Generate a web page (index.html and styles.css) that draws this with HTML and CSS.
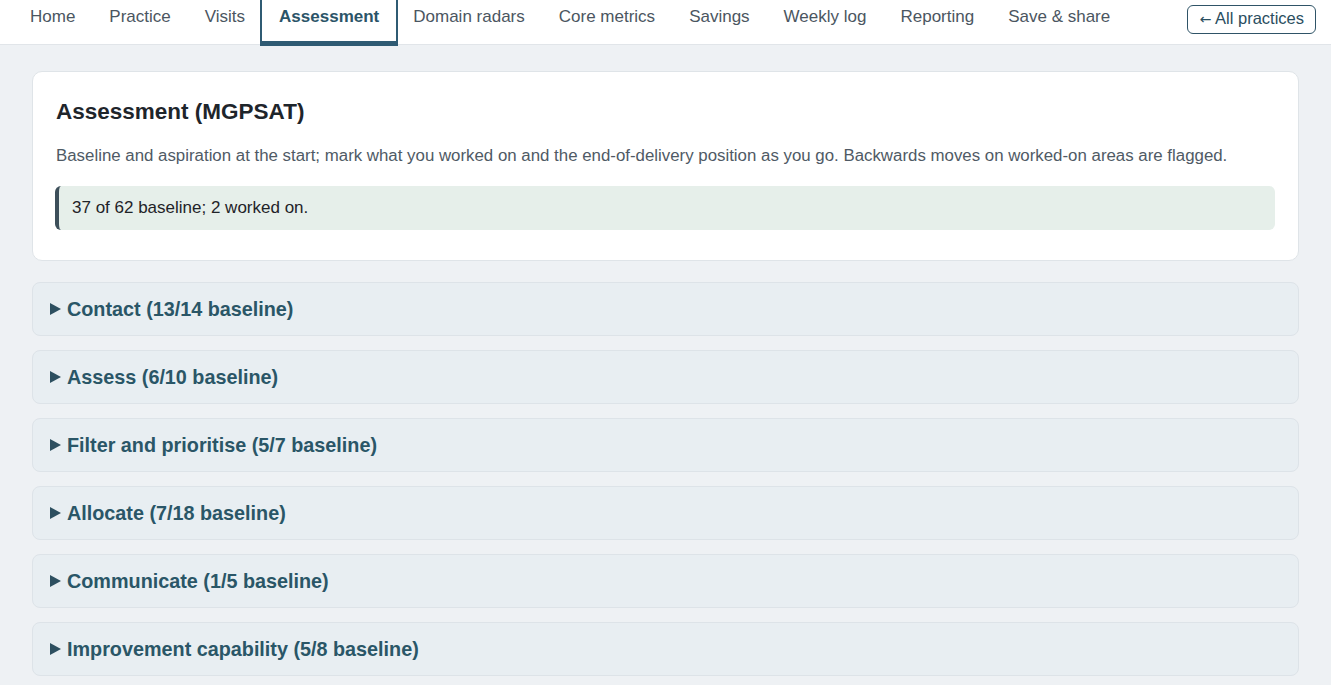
FILE: index.html
```html
<!DOCTYPE html>
<html lang="en">
<head>
<meta charset="utf-8">
<title>Assessment (MGPSAT)</title>
<link rel="stylesheet" href="styles.css">
</head>
<body>
<nav class="topnav">
  <a class="tab" href="#">Home</a>
  <a class="tab" href="#">Practice</a>
  <a class="tab" href="#">Visits</a>
  <a class="tab active" href="#">Assessment</a>
  <a class="tab" href="#">Domain radars</a>
  <a class="tab" href="#">Core metrics</a>
  <a class="tab" href="#">Savings</a>
  <a class="tab" href="#">Weekly log</a>
  <a class="tab" href="#">Reporting</a>
  <a class="tab" href="#">Save &amp; share</a>
  <a class="back" href="#"><span class="arrow">←</span> All practices</a>
</nav>
<main class="main">
  <section class="card">
    <h2 class="card-title">Assessment (MGPSAT)</h2>
    <p class="card-lead">Baseline and aspiration at the start; mark what you worked on and the end-of-delivery position as you go. Backwards moves on worked-on areas are flagged.</p>
    <div class="summary-box">37 of 62 baseline; 2 worked on.</div>
  </section>
  <details class="domain"><summary class="domain-head"><span class="tri"></span>Contact (13/14 baseline)</summary></details>
  <details class="domain"><summary class="domain-head"><span class="tri"></span>Assess (6/10 baseline)</summary></details>
  <details class="domain"><summary class="domain-head"><span class="tri"></span>Filter and prioritise (5/7 baseline)</summary></details>
  <details class="domain"><summary class="domain-head"><span class="tri"></span>Allocate (7/18 baseline)</summary></details>
  <details class="domain"><summary class="domain-head"><span class="tri"></span>Communicate (1/5 baseline)</summary></details>
  <details class="domain"><summary class="domain-head"><span class="tri"></span>Improvement capability (5/8 baseline)</summary></details>
</main>
</body>
</html>
```
FILE: styles.css
```css
html, body {
  margin: 0;
  padding: 0;
}
body {
  background: #eef1f4;
  font-family: "Liberation Sans", Arial, Helvetica, sans-serif;
  color: #1f2328;
  overflow: hidden;
}
.topnav {
  display: flex;
  align-items: flex-start;
  height: 44px;
  padding-left: 13px;
  background: #ffffff;
  border-bottom: 1px solid #e1e5e9;
}
.tab {
  box-sizing: border-box;
  height: 44px;
  padding: 7px 17px 0;
  line-height: 20px;
  font-size: 17px;
  color: #4b5661;
  text-decoration: none;
  border-bottom: 3px solid transparent;
}
.tab.active {
  font-weight: 700;
  color: #2b5468;
  border-bottom-color: #2f5b73;
  outline: 2px solid #2f5b73;
  outline-offset: 0;
}
.back {
  margin: 5px 15px 0 auto;
  padding: 2px 11px 4px 12px;
  line-height: 20px;
  font-size: 16.5px;
  color: #2a4e60;
  text-decoration: none;
  border: 1px solid #2f5467;
  border-radius: 6px;
}
.arrow {
  font-family: "DejaVu Sans", sans-serif;
  font-size: 14px;
}
.main {
  padding: 26px 32px 0;
}
.card {
  background: #ffffff;
  border: 1px solid #dfe4e8;
  border-radius: 10px;
  padding: 26px 23px 30px;
  margin-bottom: 21px;
}
.card-title {
  margin: 0 0 18px;
  font-size: 22.5px;
  line-height: 28px;
  font-weight: 700;
  color: #1e252b;
}
.card-lead {
  margin: 0 0 18px;
  font-size: 16.85px;
  line-height: 24px;
  color: #4f5a65;
}
.summary-box {
  margin-left: -1px;
  padding: 12px 13px;
  line-height: 20px;
  font-size: 17px;
  color: #1f2328;
  background: #e6efea;
  border-left: 4px solid #3d4f5a;
  border-radius: 6px;
}
.domain {
  background: #e8eef2;
  border: 1px solid #dde3e8;
  border-radius: 8px;
  margin-bottom: 14px;
}
.domain-head {
  display: flex;
  align-items: center;
  list-style: none;
  padding: 14px 17px;
  line-height: 24px;
  font-size: 19.8px;
  font-weight: 700;
  color: #2a5667;
  cursor: pointer;
}
.domain-head::-webkit-details-marker {
  display: none;
}
.tri {
  width: 0;
  height: 0;
  border-left: 11px solid #2d4f60;
  border-top: 6px solid transparent;
  border-bottom: 6px solid transparent;
  margin-right: 6px;
}
```
